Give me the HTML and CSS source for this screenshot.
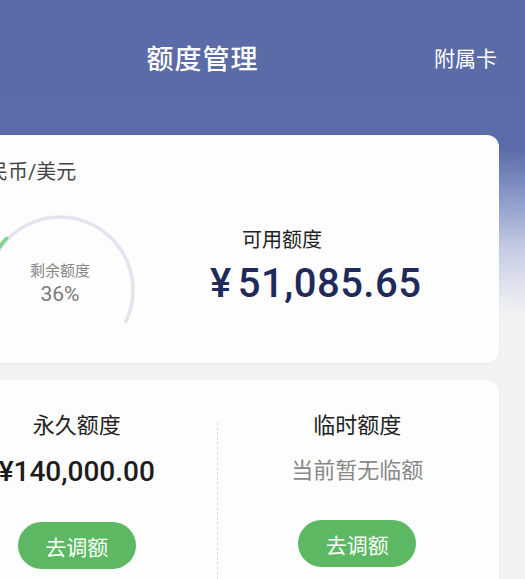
FILE: index.html
```html
<!DOCTYPE html>
<html lang="zh-CN">
<head>
    <meta charset="UTF-8">
    <meta name="viewport" content="width=device-width, initial-scale=1.0">
    <title>额度管理</title>
    <link rel="stylesheet" href="styles.css">
</head>
<body>
    <div class="screen">
        <div class="header">
            <span></span>
            <h1 class="title">额度管理</h1>
            <a class="header-link">附属卡</a>
        </div>

        <div class="card summary">
            <div class="currency">人民币/美元</div>
            <div class="summary-body">
                <div class="gauge">
                    <svg width="154" height="154" viewBox="0 0 154 154">
                        <path d="M 11.4 109 A 73 73 0 1 1 142.6 109" fill="none" stroke="#e3e5ee" stroke-width="3.5" stroke-linecap="round"/>
                        <path d="M 11.4 109 A 73 73 0 0 1 23.6 25.3" fill="none" stroke="#7fd38a" stroke-width="3.5" stroke-linecap="round"/>
                    </svg>
                    <div class="gauge-text">
                        <div class="gauge-label">剩余额度</div>
                        <div class="gauge-value">36%</div>
                    </div>
                </div>
                <div class="available">
                    <div class="available-label">可用额度</div>
                    <div class="available-amount">¥<span>51,085.65</span></div>
                </div>
            </div>
        </div>

        <div class="card limits">
            <div class="limit">
                <div class="limit-title">永久额度</div>
                <div class="limit-amount">¥140,000.00</div>
                <button class="adjust">去调额</button>
            </div>
            <div class="divider"></div>
            <div class="limit">
                <div class="limit-title">临时额度</div>
                <div class="limit-empty">当前暂无临额</div>
                <button class="adjust">去调额</button>
            </div>
        </div>
    </div>
</body>
</html>
```

FILE: styles.css
```css
html, body {
    margin: 0;
    height: 100%;
    overflow: hidden;
}
body {
    font-family: Roboto, "Noto Sans CJK SC", sans-serif;
    background-color: #f2f2f3;
    color: #222;
}
.screen {
    width: 645px;
    margin-left: -120px;
    min-height: 579px;
    background: linear-gradient(to bottom, #5a6ba7 0, #5b6ca8 150px, #8e9ccb 200px, #c6cde3 250px, #e9ebf2 300px, #f2f2f3 318px);
}
.header {
    height: 114px;
    display: grid;
    grid-template-columns: 1fr auto 1fr;
    align-items: center;
    padding: 0 28px;
    color: #fff;
}
.title {
    margin: 0;
    font-size: 27px;
    font-weight: 500;
    letter-spacing: 1px;
}
.header-link {
    justify-self: end;
    font-size: 21px;
}
.card {
    margin: 0 26px;
    background-color: #fdfdfd;
    border-radius: 12px;
    box-shadow: 0 1px 3px rgba(0, 0, 0, 0.04);
}
.summary {
    margin-top: 21px;
    height: 228px;
    box-sizing: border-box;
    padding: 25px 0 0 62px;
}
.currency {
    font-size: 20px;
    line-height: 24px;
    color: #444;
}
.summary-body {
    display: flex;
    margin-top: 29px;
}
.gauge {
    display: grid;
    margin-left: 15px;
    width: 154px;
    height: 154px;
}
.gauge svg, .gauge-text {
    grid-area: 1 / 1;
}
.gauge-text {
    display: flex;
    flex-direction: column;
    align-items: center;
    justify-content: center;
    padding-bottom: 14px;
    color: #7a7a7a;
}
.gauge-label {
    font-size: 15px;
    line-height: 22px;
    color: #888;
}
.gauge-value {
    font-size: 21px;
    line-height: 24px;
}
.available {
    margin-left: 73px;
    padding-top: 12px;
}
.available-label {
    margin-left: 32px;
    font-size: 20px;
    line-height: 30px;
    color: #222;
}
.available-amount {
    margin-top: 3px;
    font-size: 40px;
    font-weight: 500;
    line-height: 52px;
    letter-spacing: 0.5px;
    color: #1f2a5b;
}
.available-amount span {
    margin-left: 6px;
}
.limits {
    margin-top: 17px;
    display: grid;
    grid-template-columns: 1fr 1px 1fr;
    padding: 0 2px 0 31px;
    height: 230px;
}
.limit {
    display: flex;
    flex-direction: column;
    align-items: center;
    padding-top: 31px;
}
.limit-title {
    font-size: 22px;
    line-height: 30px;
    color: #222;
}
.limit-amount {
    margin-top: 13px;
    font-size: 28px;
    font-weight: 500;
    line-height: 36px;
    color: #1c1c1c;
}
.limit-empty {
    margin-top: 13px;
    font-size: 22px;
    line-height: 34px;
    color: #888;
}
.divider {
    margin-top: 42px;
    border-left: 1px dashed #dcdcdc;
}
.adjust {
    margin-top: 32px;
    width: 118px;
    height: 47px;
    border: none;
    border-radius: 24px;
    background-color: #5cb863;
    color: #fff;
    font-family: inherit;
    font-size: 21px;
}
```
